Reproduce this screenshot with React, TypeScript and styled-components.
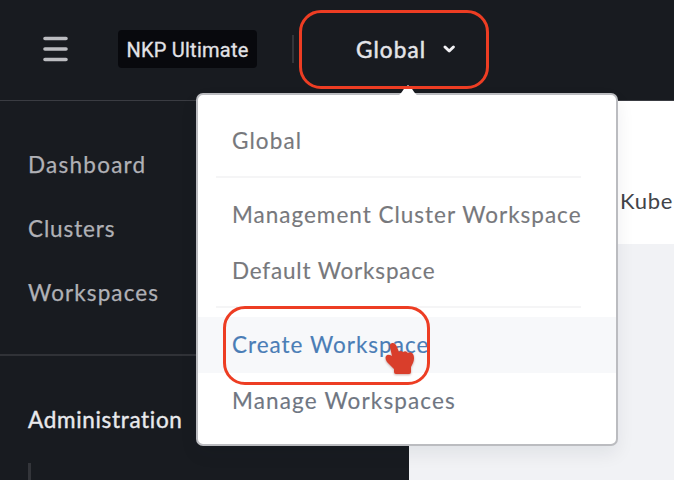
import React from "react";
import styled, { createGlobalStyle } from "styled-components";

const GlobalStyle = createGlobalStyle`
  * { box-sizing: border-box; }
  body { margin: 0; overflow: hidden; }
`;

const Page = styled.div`
  position: relative;
  width: 674px;
  height: 480px;
  overflow: hidden;
  display: flex;
  flex-direction: column;
  background: #f1f2f5;
  font-family: Lato, "Liberation Sans", sans-serif;
`;

const Header = styled.header`
  flex: none;
  height: 101px;
  display: flex;
  align-items: center;
  padding: 0 0 3px 43px;
  background: #181b20;
  border-bottom: 1px solid #3a3c42;
`;

const MenuButton = styled.button`
  display: flex;
  padding: 0;
  border: 0;
  background: none;
`;

const Badge = styled.div`
  margin-left: 49px;
  width: 139px;
  height: 38px;
  border-radius: 4px;
  background: #08090d;
  color: #e2e2e6;
  display: flex;
  align-items: center;
  justify-content: center;
  padding-top: 2px;
  font: 400 20px Roboto, sans-serif;
  letter-spacing: 0.25px;
  -webkit-text-stroke: 0.3px currentColor;
  white-space: nowrap;
`;

const Separator = styled.div`
  margin-left: 35px;
  width: 2px;
  height: 28px;
  background: #33353a;
`;

const Switcher = styled.button`
  margin-left: 62px;
  padding: 1px 0 0;
  border: 0;
  background: none;
  color: #e4e5e9;
  display: flex;
  align-items: center;
  gap: 16px;
  font: 400 22.5px Lato, sans-serif;
  letter-spacing: 1.1px;
  -webkit-text-stroke: 0.5px currentColor;
`;

const Body = styled.div`
  flex: 1;
  display: flex;
`;

const Sidebar = styled.aside`
  flex: none;
  width: 409px;
  display: flex;
  flex-direction: column;
  background: #181b20;
`;

const Nav = styled.nav`
  height: 255px;
  padding: 31px 28px 0;
  border-bottom: 2px solid #303237;
`;

const NavItem = styled.a<{ $spacing: number }>`
  display: flex;
  align-items: center;
  height: 64px;
  color: #b0b1b6;
  font-size: 22.5px;
  letter-spacing: ${(p) => p.$spacing}px;
  -webkit-text-stroke: 0.25px currentColor;
`;

const NavHeading = styled.div`
  padding: 50px 28px 0;
  height: 107px;
  color: #e8e9ec;
  font-size: 22.5px;
  line-height: 28px;
  letter-spacing: 0.68px;
  -webkit-text-stroke: 0.4px currentColor;
`;

const TreeLine = styled.div`
  margin-left: 28px;
  width: 3px;
  flex: 1;
  background: #33353a;
`;

const Content = styled.main`
  flex: 1;
  min-width: 0;
`;

const ContentHeader = styled.div`
  height: 143px;
  padding: 86px 0 0 211px;
  background: #fff;
  color: #424348;
  font-size: 22px;
  line-height: 28px;
  letter-spacing: 0.7px;
  white-space: nowrap;
`;

const Popover = styled.div`
  position: absolute;
  left: 196px;
  top: 93px;
  width: 422px;
  height: 353px;
  padding-top: 18px;
  border: 2px solid #bbbcc0;
  border-radius: 7px;
  background: #fff;
  box-shadow: 0 8px 18px rgba(20, 24, 36, 0.07);
`;

const Arrow = styled.svg`
  position: absolute;
  left: 199px;
  top: -11px;
`;

const MenuItem = styled.div<{ $active?: boolean; $spacing: number; $tone?: string }>`
  display: flex;
  align-items: center;
  height: 56px;
  padding: 0 0 1px 34px;
  color: ${(p) => p.$tone ?? "#77787c"};
  background: ${(p) => (p.$active ? "#f7f8fa" : "transparent")};
  font-size: 22.5px;
  letter-spacing: ${(p) => p.$spacing}px;
  -webkit-text-stroke: 0.15px currentColor;
  white-space: nowrap;
`;

const Divider = styled.div`
  height: 2px;
  margin: 7px 35px 9px 18px;
  background: #f5f5f6;
`;

const Outline = styled.div<{ $x: number; $y: number; $w: number; $h: number; $r: number }>`
  position: absolute;
  left: ${(p) => p.$x}px;
  top: ${(p) => p.$y}px;
  width: ${(p) => p.$w}px;
  height: ${(p) => p.$h}px;
  border: 3px solid #ed3d23;
  border-radius: ${(p) => p.$r}px;
`;

const Pointer = styled.svg`
  position: absolute;
  left: 384px;
  top: 342px;
  filter: drop-shadow(0 1px 1px rgba(130, 50, 40, 0.4));
`;

const navItems = [
  { label: "Dashboard", spacing: 1.25 },
  { label: "Clusters", spacing: 0.88 },
  { label: "Workspaces", spacing: 1.1 },
];

export default function App() {
  return (
    <Page>
      <GlobalStyle />
      <Header>
        <MenuButton aria-label="Menu">
          <svg width="26" height="28" viewBox="0 0 26 28" stroke="#bcbdc1" strokeWidth="3.6" strokeLinecap="round">
            <path d="M2 3.500H23M2 14H23M2 24.500H23" />
          </svg>
        </MenuButton>
        <Badge>NKP Ultimate</Badge>
        <Separator />
        <Switcher>
          Global
          <svg width="14" height="10" viewBox="0 0 14 10" fill="none" stroke="#f1f1f4" strokeWidth="3" strokeLinecap="round" strokeLinejoin="round">
            <path d="M3 3L7.200 7L11.400 3" />
          </svg>
        </Switcher>
      </Header>
      <Body>
        <Sidebar>
          <Nav>
            {navItems.map((item) => (
              <NavItem key={item.label} $spacing={item.spacing}>{item.label}</NavItem>
            ))}
          </Nav>
          <NavHeading>Administration</NavHeading>
          <TreeLine />
        </Sidebar>
        <Content>
          <ContentHeader>Kube</ContentHeader>
        </Content>
      </Body>
      <Popover>
        <Arrow width="22" height="12" viewBox="0 0 22 12" fill="#fff">
          <path d="M0 12C4 11 6 5 9 3L11 1L13 3C16 5 18 11 22 12Z" />
        </Arrow>
        <MenuItem $spacing={1.1}>Global</MenuItem>
        <Divider />
        <MenuItem $spacing={1}>Management Cluster Workspace</MenuItem>
        <MenuItem $spacing={0.82}>Default Workspace</MenuItem>
        <Divider />
        <MenuItem $active $spacing={1} $tone="#4a7db6">Create Workspace</MenuItem>
        <MenuItem $spacing={1.15} $tone="#6f7682">Manage Workspaces</MenuItem>
      </Popover>
      <Pointer width="32" height="34" viewBox="0 0 32 34">
        <path
          d="M8 1C10 .4 12 2 13 5L15 10Q17 8 19 10Q22 8 24 11Q28 9 29.500 13C31 18 29 21 27 25V30Q27 32 25 32H12Q10 32 10 30V27L3 20Q0 15 3 13Q5 12 8 14L6 5Q5 2 8 1Z"
          fill="#d93e2b"
        />
      </Pointer>
      <Outline $x={299} $y={10} $w={190} $h={79} $r={22} />
      <Outline $x={223} $y={306} $w={207} $h={79} $r={22} />
    </Page>
  );
}
